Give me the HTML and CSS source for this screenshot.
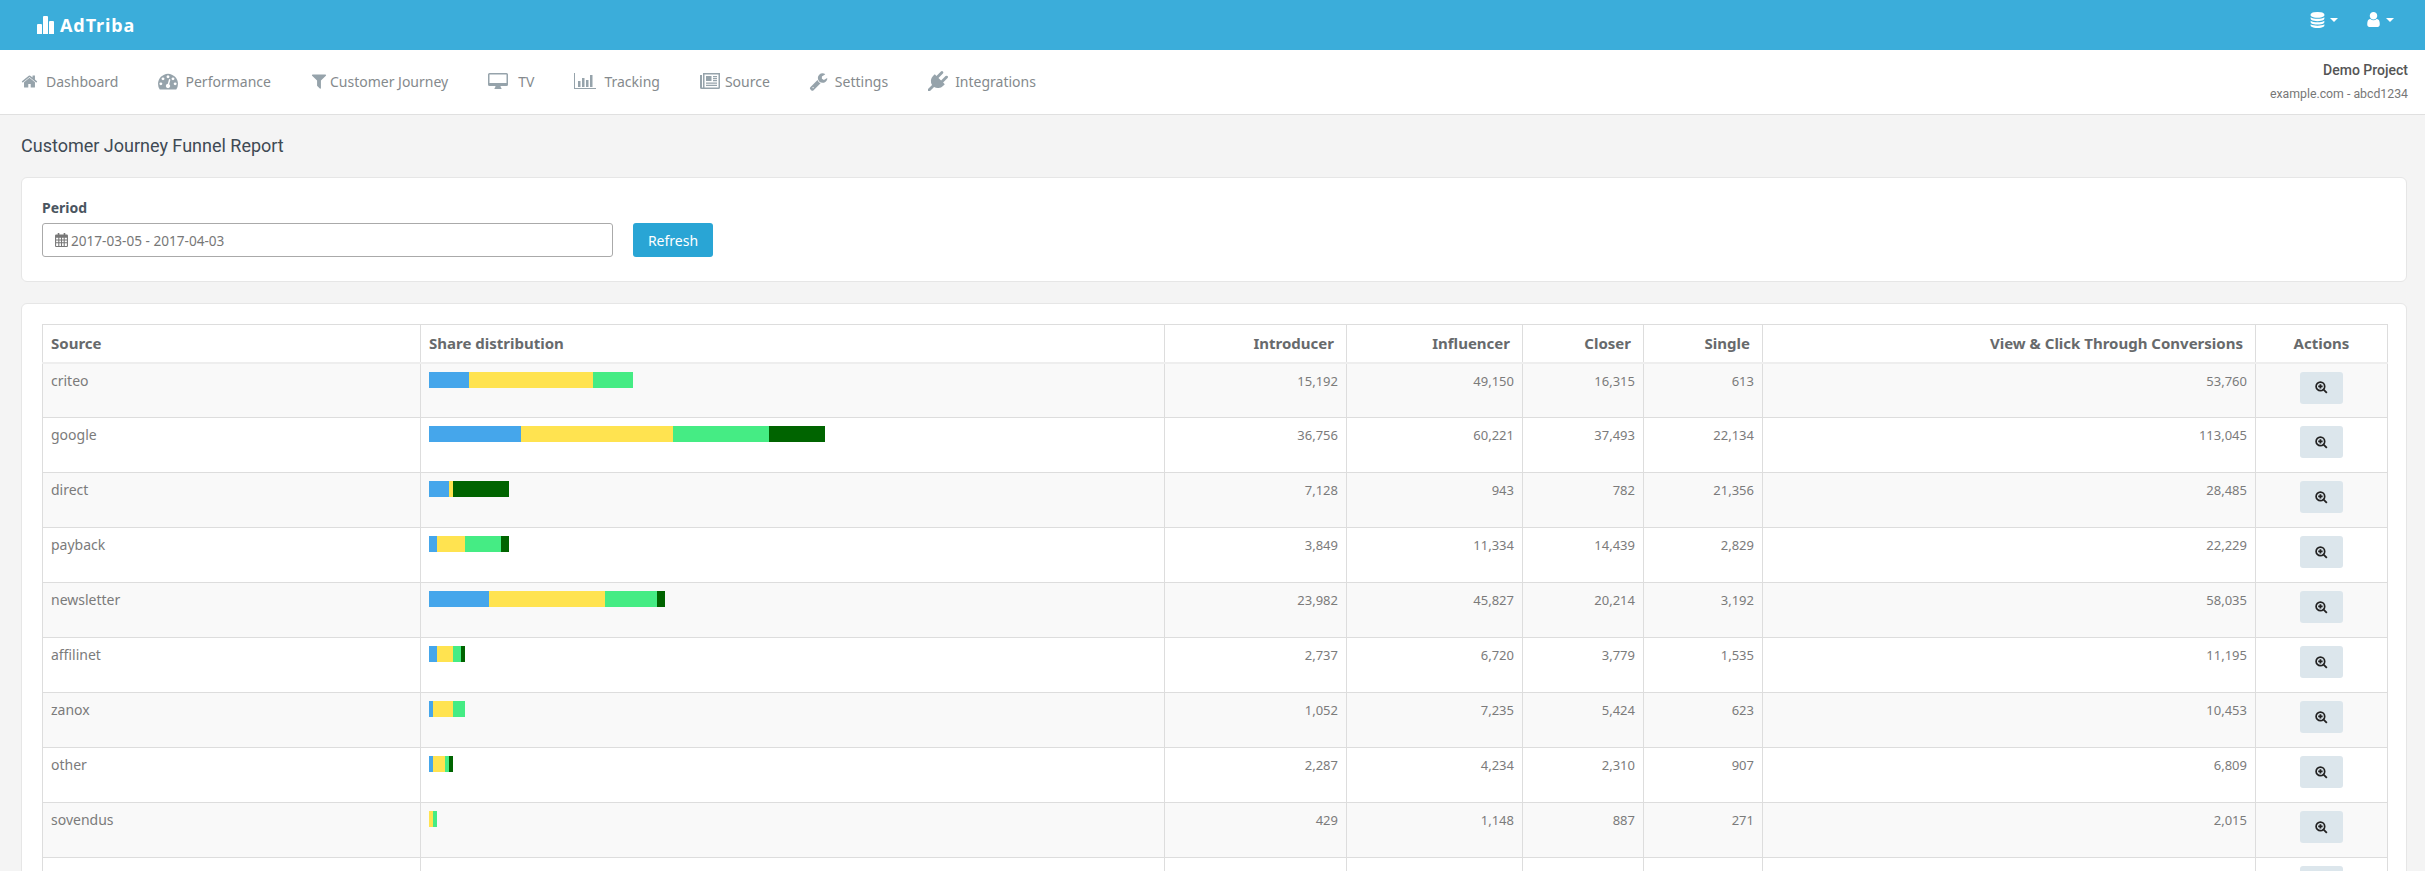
FILE: index.html
```html
<!DOCTYPE html>
<html lang="en">
<head>
<meta charset="utf-8">
<title>AdTriba - Customer Journey Funnel Report</title>
<link rel="stylesheet" href="styles.css">
</head>
<body>
<svg class="defs" aria-hidden="true">
  <symbol id="i-home" viewBox="0 0 1792 1792"><path d="M1472 992v480q0 26-19 45t-45 19h-384v-384h-256v384h-384q-26 0-45-19t-19-45v-480q0-1 .5-3t.5-3l575-474 575 474q1 2 1 6zm223-69l-62 74q-8 9-21 11h-3q-13 0-21-7l-692-577-692 577q-12 8-24 7-13-2-21-11l-62-74q-8-10-7-23.5t11-21.5l719-599q32-26 76-26t76 26l244 204v-195q0-14 9-23t23-9h192q14 0 23 9t9 23v408l219 182q10 8 11 21.5t-7 23.5z"/></symbol>
  <symbol id="i-gauge" viewBox="0 0 1792 1792"><path d="M384 1152q0-53-37.5-90.5t-90.5-37.5-90.5 37.5-37.5 90.5 37.5 90.5 90.5 37.5 90.5-37.5 37.5-90.5zm192-448q0-53-37.5-90.5t-90.5-37.5-90.5 37.5-37.5 90.5 37.5 90.5 90.5 37.5 90.5-37.5 37.5-90.5zm428 481l101-382q6-26-7.5-48.5t-38.5-29.5-48 6.5-30 39.5l-101 382q-60 5-107 43.5t-63 98.5q-20 77 20 146t117 89 146-20 89-117q16-60-6-117t-72-91zm660-33q0-53-37.5-90.5t-90.5-37.5-90.5 37.5-37.5 90.5 37.5 90.5 90.5 37.5 90.5-37.5 37.5-90.5zm-640-640q0-53-37.5-90.5t-90.5-37.5-90.5 37.5-37.5 90.5 37.5 90.5 90.5 37.5 90.5-37.5 37.5-90.5zm448 192q0-53-37.5-90.5t-90.5-37.5-90.5 37.5-37.5 90.5 37.5 90.5 90.5 37.5 90.5-37.5 37.5-90.5zm320 448q0 261-141 483-19 29-54 29h-1402q-35 0-54-29-141-221-141-483 0-182 71-348t191-286 286-191 348-71 348 71 286 191 191 286 71 348z"/></symbol>
  <symbol id="i-filter" viewBox="0 0 1792 1792"><path d="M1595 295q17 41-14 70l-493 493v742q0 42-39 59-13 5-25 5-27 0-45-19l-256-256q-19-19-19-45v-486l-493-493q-31-29-14-70 17-39 59-39h1280q42 0 59 39z"/></symbol>
  <symbol id="i-desktop" viewBox="0 0 20 18"><path fill-rule="evenodd" d="M1.5 1h17A1.5 1.5 0 0 1 20 2.500v10a1.500 1.500 0 0 1-1.500 1.500H12.500q0 1.500 1 2.300v.7h-7v-.7q1-.8 1-2.300H1.500A1.500 1.500 0 0 1 0 12.500v-10A1.500 1.500 0 0 1 1.500 1zM1.500 2.500v8.500h17V2.500z"/></symbol>
  <symbol id="i-chart" viewBox="0 0 22 16"><path d="M0 0h1v15h21v1H0zM4 8h2.500v6H4zM8 5h2.500v9H8zM12 7h2.500v7H12zM16 2h2.500v12H16z"/></symbol>
  <symbol id="i-news" viewBox="0 0 20 16"><path fill-rule="evenodd" d="M3 0h17v14.500a1.500 1.500 0 0 1-1.500 1.500H1.500A1.500 1.500 0 0 1 0 14.500V2h2v12.500h1zM4.500 1.500v13h14v-13zM6 3h5.500v5H6zM13 3h4v1.200h-4zM13 5h4v1.200h-4zM13 7h4v1.200h-4zM6 9.500h11v1.200H6zM6 11.800h11V13H6z"/></symbol>
  <symbol id="i-wrench" viewBox="0 0 1792 1792"><path d="M448 1472q0-26-19-45t-45-19-45 19-19 45 19 45 45 19 45-19 19-45zm644-420l-682 682q-37 37-90 37-52 0-91-37l-106-108q-38-36-38-90 0-53 38-91l681-681q39 98 114.500 173.500t173.500 114.500zm634-435q0 39-23 106-47 134-164.500 217.500t-258.500 83.500q-185 0-316.500-131.500t-131.500-316.500 131.500-316.500 316.500-131.500q58 0 121.500 16.500t107.500 46.500q16 11 16 28t-16 28l-293 169v224l193 107q5-3 79-48.500t135.500-81 70.500-35.500q15 0 23.500 10t8.500 25z"/></symbol>
  <symbol id="i-plug" viewBox="0 0 1792 1792"><path d="M1755 453q37 38 37 90.500t-37 90.500l-401 400 150 150-160 160q-163 163-389.500 186.500t-411.500-100.500l-362 362h-181v-181l362-362q-124-185-100.500-411.500t186.500-389.500l160-160 150 150 400-401q38-37 91-37t90 37 37 90.500-37 90.500l-400 401 234 234 401-400q38-37 91-37t90 37z"/></symbol>
  <symbol id="i-db" viewBox="0 0 1536 1792"><path transform="translate(-128 0)" d="M896 768q237 0 443-43t325-127v170q0 69-103 128t-280 93.500-385 34.500-385-34.500-280-93.500-103-128v-170q119 84 325 127t443 43zm0 768q237 0 443-43t325-127v170q0 69-103 128t-280 93.500-385 34.500-385-34.500-280-93.500-103-128v-170q119 84 325 127t443 43zm0-384q237 0 443-43t325-127v170q0 69-103 128t-280 93.500-385 34.500-385-34.500-280-93.500-103-128v-170q119 84 325 127t443 43zm0-1152q208 0 385 34.500t280 93.500 103 128v128q0 69-103 128t-280 93.500-385 34.500-385-34.500-280-93.500-103-128v-128q0-69 103-128t280-93.500 385-34.500z"/></symbol>
  <symbol id="i-user" viewBox="256 128 1280 1536"><path d="M1536 1399q0 109-62.500 187t-150.500 78h-854q-88 0-150.500-78t-62.500-187q0-85 8.500-160.500t31.500-152 58.500-131 94-89 134.500-34.500q131 128 313 128t313-128q76 0 134.500 34.500t94 89 58.500 131 31.500 152 8.500 160.500zm-256-887q0 159-112.500 271.500t-271.500 112.500-271.500-112.500-112.500-271.500 112.500-271.500 271.500-112.500 271.500 112.500 112.500 271.500z"/></symbol>
  <symbol id="i-cal" viewBox="0 0 12 13"><path fill-rule="evenodd" d="M2.500 0h1.500v1.500h4V0h1.500v1.500H11a1 1 0 0 1 1 1V12a1 1 0 0 1-1 1H1a1 1 0 0 1-1-1V2.500a1 1 0 0 1 1-1h1.500zM1 4.500V6h2V4.500zM4 4.500V6h1.500V4.500zM6.500 4.500V6H8V4.500zM9 4.500V6h2V4.500zM1 7v1.500h2V7zM4 7v1.500h1.500V7zM6.500 7v1.500H8V7zM9 7v1.500h2V7zM1 9.500V12h2V9.500zM4 9.500V12h1.500V9.500zM6.500 9.500V12H8V9.500zM9 9.500V12h2V9.500z"/></symbol>
  <symbol id="i-zoom" viewBox="0 0 13 13"><circle cx="5.400" cy="5.400" r="4.300" fill="none" stroke="currentColor" stroke-width="1.700"/><path d="M8.500 7.300l4 4-1.300 1.300-4-4zM4.500 3.200h1.800v1.300h1.300v1.800H6.300v1.300H4.500V6.300H3.200V4.500h1.300z"/></symbol>
</svg>

<header class="topbar">
  <a class="logo">
    <svg class="logo-mark" viewBox="0 0 17 18" aria-hidden="true"><path d="M1 8h3q1 0 1 1v9H0V9q0-1 1-1zM7 0h3q1 0 1 1v17H6V1q0-1 1-1zM13 5h3q1 0 1 1v12h-5V6q0-1 1-1z"/></svg>
    <span>AdTriba</span>
  </a>
  <div class="top-tools">
    <span class="tool"><svg class="tool-db"><use href="#i-db"/></svg><i class="caret"></i></span>
    <span class="tool"><svg class="tool-user"><use href="#i-user"/></svg><i class="caret"></i></span>
  </div>
</header>

<nav class="navbar">
  <ul class="menu">
    <li class="menu-item"><svg class="ic ic-home"><use href="#i-home"/></svg>Dashboard</li>
    <li class="menu-item"><svg class="ic ic-gauge"><use href="#i-gauge"/></svg>Performance</li>
    <li class="menu-item"><svg class="ic ic-filter"><use href="#i-filter"/></svg>Customer Journey</li>
    <li class="menu-item"><svg class="ic ic-desktop"><use href="#i-desktop"/></svg>TV</li>
    <li class="menu-item"><svg class="ic ic-chart"><use href="#i-chart"/></svg>Tracking</li>
    <li class="menu-item"><svg class="ic ic-news"><use href="#i-news"/></svg>Source</li>
    <li class="menu-item"><svg class="ic ic-wrench"><use href="#i-wrench"/></svg>Settings</li>
    <li class="menu-item"><svg class="ic ic-plug"><use href="#i-plug"/></svg>Integrations</li>
  </ul>
  <div class="project">
    <div class="project-name">Demo Project</div>
    <div class="project-site">example.com - abcd1234</div>
  </div>
</nav>

<main class="content">
  <h1 class="page-title">Customer Journey Funnel Report</h1>

  <section class="card filter-card">
    <div class="field">
      <label class="field-label">Period</label>
      <div class="date-input"><svg class="ic-cal"><use href="#i-cal"/></svg>2017-03-05 - 2017-04-03</div>
    </div>
    <button class="btn-refresh" type="button">Refresh</button>
  </section>

  <section class="card table-card">
    <table class="report">
      <thead>
        <tr>
          <th class="c-source">Source</th>
          <th class="c-share">Share distribution</th>
          <th class="c-intro num">Introducer</th>
          <th class="c-infl num">Influencer</th>
          <th class="c-closer num">Closer</th>
          <th class="c-single num">Single</th>
          <th class="c-conv num">View &amp; Click Through Conversions</th>
          <th class="c-actions act">Actions</th>
        </tr>
      </thead>
      <tbody>
        <tr>
          <td class="name">criteo</td>
          <td><div class="bar"><span class="s1" style="width:40px"></span><span class="s2" style="width:124px"></span><span class="s3" style="width:40px"></span></div></td>
          <td class="num">15,192</td><td class="num">49,150</td><td class="num">16,315</td><td class="num">613</td><td class="num">53,760</td>
          <td class="act"><button class="btn-zoom" type="button"><svg><use href="#i-zoom"/></svg></button></td>
        </tr>
        <tr>
          <td class="name">google</td>
          <td><div class="bar"><span class="s1" style="width:92px"></span><span class="s2" style="width:152px"></span><span class="s3" style="width:96px"></span><span class="s4" style="width:56px"></span></div></td>
          <td class="num">36,756</td><td class="num">60,221</td><td class="num">37,493</td><td class="num">22,134</td><td class="num">113,045</td>
          <td class="act"><button class="btn-zoom" type="button"><svg><use href="#i-zoom"/></svg></button></td>
        </tr>
        <tr>
          <td class="name">direct</td>
          <td><div class="bar"><span class="s1" style="width:20px"></span><span class="s2" style="width:4px"></span><span class="s4" style="width:56px"></span></div></td>
          <td class="num">7,128</td><td class="num">943</td><td class="num">782</td><td class="num">21,356</td><td class="num">28,485</td>
          <td class="act"><button class="btn-zoom" type="button"><svg><use href="#i-zoom"/></svg></button></td>
        </tr>
        <tr>
          <td class="name">payback</td>
          <td><div class="bar"><span class="s1" style="width:8px"></span><span class="s2" style="width:28px"></span><span class="s3" style="width:36px"></span><span class="s4" style="width:8px"></span></div></td>
          <td class="num">3,849</td><td class="num">11,334</td><td class="num">14,439</td><td class="num">2,829</td><td class="num">22,229</td>
          <td class="act"><button class="btn-zoom" type="button"><svg><use href="#i-zoom"/></svg></button></td>
        </tr>
        <tr>
          <td class="name">newsletter</td>
          <td><div class="bar"><span class="s1" style="width:60px"></span><span class="s2" style="width:116px"></span><span class="s3" style="width:52px"></span><span class="s4" style="width:8px"></span></div></td>
          <td class="num">23,982</td><td class="num">45,827</td><td class="num">20,214</td><td class="num">3,192</td><td class="num">58,035</td>
          <td class="act"><button class="btn-zoom" type="button"><svg><use href="#i-zoom"/></svg></button></td>
        </tr>
        <tr>
          <td class="name">affilinet</td>
          <td><div class="bar"><span class="s1" style="width:8px"></span><span class="s2" style="width:16px"></span><span class="s3" style="width:8px"></span><span class="s4" style="width:4px"></span></div></td>
          <td class="num">2,737</td><td class="num">6,720</td><td class="num">3,779</td><td class="num">1,535</td><td class="num">11,195</td>
          <td class="act"><button class="btn-zoom" type="button"><svg><use href="#i-zoom"/></svg></button></td>
        </tr>
        <tr>
          <td class="name">zanox</td>
          <td><div class="bar"><span class="s1" style="width:4px"></span><span class="s2" style="width:20px"></span><span class="s3" style="width:12px"></span></div></td>
          <td class="num">1,052</td><td class="num">7,235</td><td class="num">5,424</td><td class="num">623</td><td class="num">10,453</td>
          <td class="act"><button class="btn-zoom" type="button"><svg><use href="#i-zoom"/></svg></button></td>
        </tr>
        <tr>
          <td class="name">other</td>
          <td><div class="bar"><span class="s1" style="width:4px"></span><span class="s2" style="width:12px"></span><span class="s3" style="width:4px"></span><span class="s4" style="width:4px"></span></div></td>
          <td class="num">2,287</td><td class="num">4,234</td><td class="num">2,310</td><td class="num">907</td><td class="num">6,809</td>
          <td class="act"><button class="btn-zoom" type="button"><svg><use href="#i-zoom"/></svg></button></td>
        </tr>
        <tr>
          <td class="name">sovendus</td>
          <td><div class="bar"><span class="s2" style="width:4px"></span><span class="s3" style="width:4px"></span></div></td>
          <td class="num">429</td><td class="num">1,148</td><td class="num">887</td><td class="num">271</td><td class="num">2,015</td>
          <td class="act"><button class="btn-zoom" type="button"><svg><use href="#i-zoom"/></svg></button></td>
        </tr>
        <tr>
          <td></td><td></td><td></td><td></td><td></td><td></td><td></td>
          <td class="act"><button class="btn-zoom" type="button"><svg><use href="#i-zoom"/></svg></button></td>
        </tr>
      </tbody>
    </table>
  </section>
</main>
</body>
</html>
```

FILE: styles.css
```css
* { box-sizing: border-box; }
html, body { height: 100%; overflow: hidden; }
body {
  margin: 0;
  background: #f4f4f4;
  color: #777;
  font-family: "Noto Sans", "Open Sans", sans-serif;
  font-size: 13px;
}
.defs { display: none; }

/* top bar */
.topbar {
  height: 50px;
  background: #3badda;
  display: flex;
  align-items: center;
  justify-content: space-between;
  padding: 0 31px 0 37px;
  color: #fff;
}
.logo { display: flex; align-items: center; gap: 6px; color: #fff; font-weight: 700; font-size: 18px; letter-spacing: .9px; }
.logo-mark { width: 17px; height: 18px; fill: #fff; }
.top-tools { display: flex; gap: 28px; margin-bottom: 11px; }
.tool { display: flex; align-items: center; gap: 5px; }
.tool svg { fill: #fff; display: block; }
.tool-db { width: 15px; height: 16px; }
.tool-user { width: 15px; height: 15px; }
.caret {
  width: 0; height: 0;
  border-left: 4px solid transparent;
  border-right: 4px solid transparent;
  border-top: 4px solid #fff;
}

/* nav */
.navbar {
  height: 65px;
  background: #fff;
  border-bottom: 1px solid #e0e0e0;
  display: flex;
  align-items: center;
  justify-content: space-between;
  padding: 0 17px 0 21px;
}
.menu { list-style: none; margin: 0 0 2px; padding: 0; display: flex; gap: 40px; }
.menu-item { display: flex; align-items: center; color: #858a8d; font-size: 14px; }
.ic { fill: #96a3ab; display: block; flex: none; }
.ic-home { width: 17px; height: 17px; margin-right: 8px; }
.ic-gauge { width: 20px; height: 20px; margin-right: 7px; }
.ic-filter { width: 18px; height: 18px; margin-right: 2px; margin-left: -1px; }
.ic-desktop { width: 20px; height: 18px; margin-right: 10px; }
.ic-chart { width: 22px; height: 16px; margin-right: 8px; }
.ic-news { width: 20px; height: 16px; margin-right: 5px; }
.ic-wrench { width: 19px; height: 19px; margin-right: 7px; margin-left: -1px; }
.ic-plug { width: 20px; height: 20px; margin-right: 7px; }
.project { text-align: right; font-family: Roboto, sans-serif; }
.project-name { font-weight: 500; font-size: 14px; color: #555; line-height: 24px; }
.project-site { font-size: 12.3px; color: #777; line-height: 24px; }

/* content */
.content { padding: 0 18px 0 21px; }
.page-title {
  margin: 0;
  padding-top: 20px;
  height: 62px;
  font-family: Roboto, sans-serif;
  font-weight: 400;
  font-size: 18px;
  line-height: 21px;
  color: #3f4a54;
}
.card {
  background: #fff;
  border: 1px solid #e6e6e6;
  border-radius: 6px;
}
.filter-card {
  height: 105px;
  padding: 0 20px;
  display: flex;
  align-items: flex-start;
  gap: 20px;
  margin-bottom: 21px;
}
.field { width: 571px; padding-top: 21px; }
.field-label { display: block; font-weight: 700; font-size: 14px; line-height: 18px; color: #4a5560; margin-bottom: 6px; }
.date-input {
  height: 34px;
  border: 1px solid #aaa;
  border-radius: 3px;
  display: flex;
  align-items: center;
  padding-left: 12px;
  color: #777;
  font-size: 13.6px;
}
.ic-cal { width: 13px; height: 14px; fill: #777; margin-right: 3px; }
.btn-refresh {
  margin-top: 45px;
  width: 80px;
  height: 34px;
  border: 0;
  border-radius: 3px;
  background: #29a5d5;
  color: #fff;
  font-family: inherit;
  font-size: 14px;
  padding: 0;
}
.table-card { padding: 20px 20px 0; }

/* table */
.report { border-collapse: collapse; table-layout: fixed; width: 2345px; }
.c-source { width: 378px; }
.c-share { width: 744px; }
.c-intro { width: 182px; }
.c-infl { width: 176px; }
.c-closer { width: 121px; }
.c-single { width: 119px; }
.c-conv { width: 493px; }
.c-actions { width: 132px; }
.report th {
  height: 38px;
  border: 1px solid #ddd;
  border-bottom: 2px solid #eee;
  padding: 0 8px;
  text-align: left;
  font-weight: 700;
  font-size: 15px;
  color: #676a6c;
}
.report th.num { text-align: right; padding-right: 12px; }
.report th.act { text-align: center; }
.report td {
  height: 55px;
  border: 1px solid #ddd;
  padding: 8px;
  vertical-align: top;
  line-height: 18px;
  color: #7b7b7b;
}
.report td.name { font-size: 14px; }
.report td.num { text-align: right; }
.report td.act { text-align: center; }
.report tbody tr:nth-child(odd) td { background: #f9f9f9; }
.bar { display: flex; height: 16px; }
.bar span { display: block; height: 16px; }
.s1 { background: #45a6eb; }
.s2 { background: #ffe350; }
.s3 { background: #45ec84; }
.s4 { background: #006400; }
.btn-zoom {
  display: block;
  margin: 0 auto;
  width: 43px;
  height: 32px;
  border: 0;
  border-radius: 3px;
  background: #dce6ec;
  padding: 0;
  color: #222;
}
.btn-zoom svg { display: block; width: 13px; height: 13px; margin: 0 auto; fill: #222; }
```
